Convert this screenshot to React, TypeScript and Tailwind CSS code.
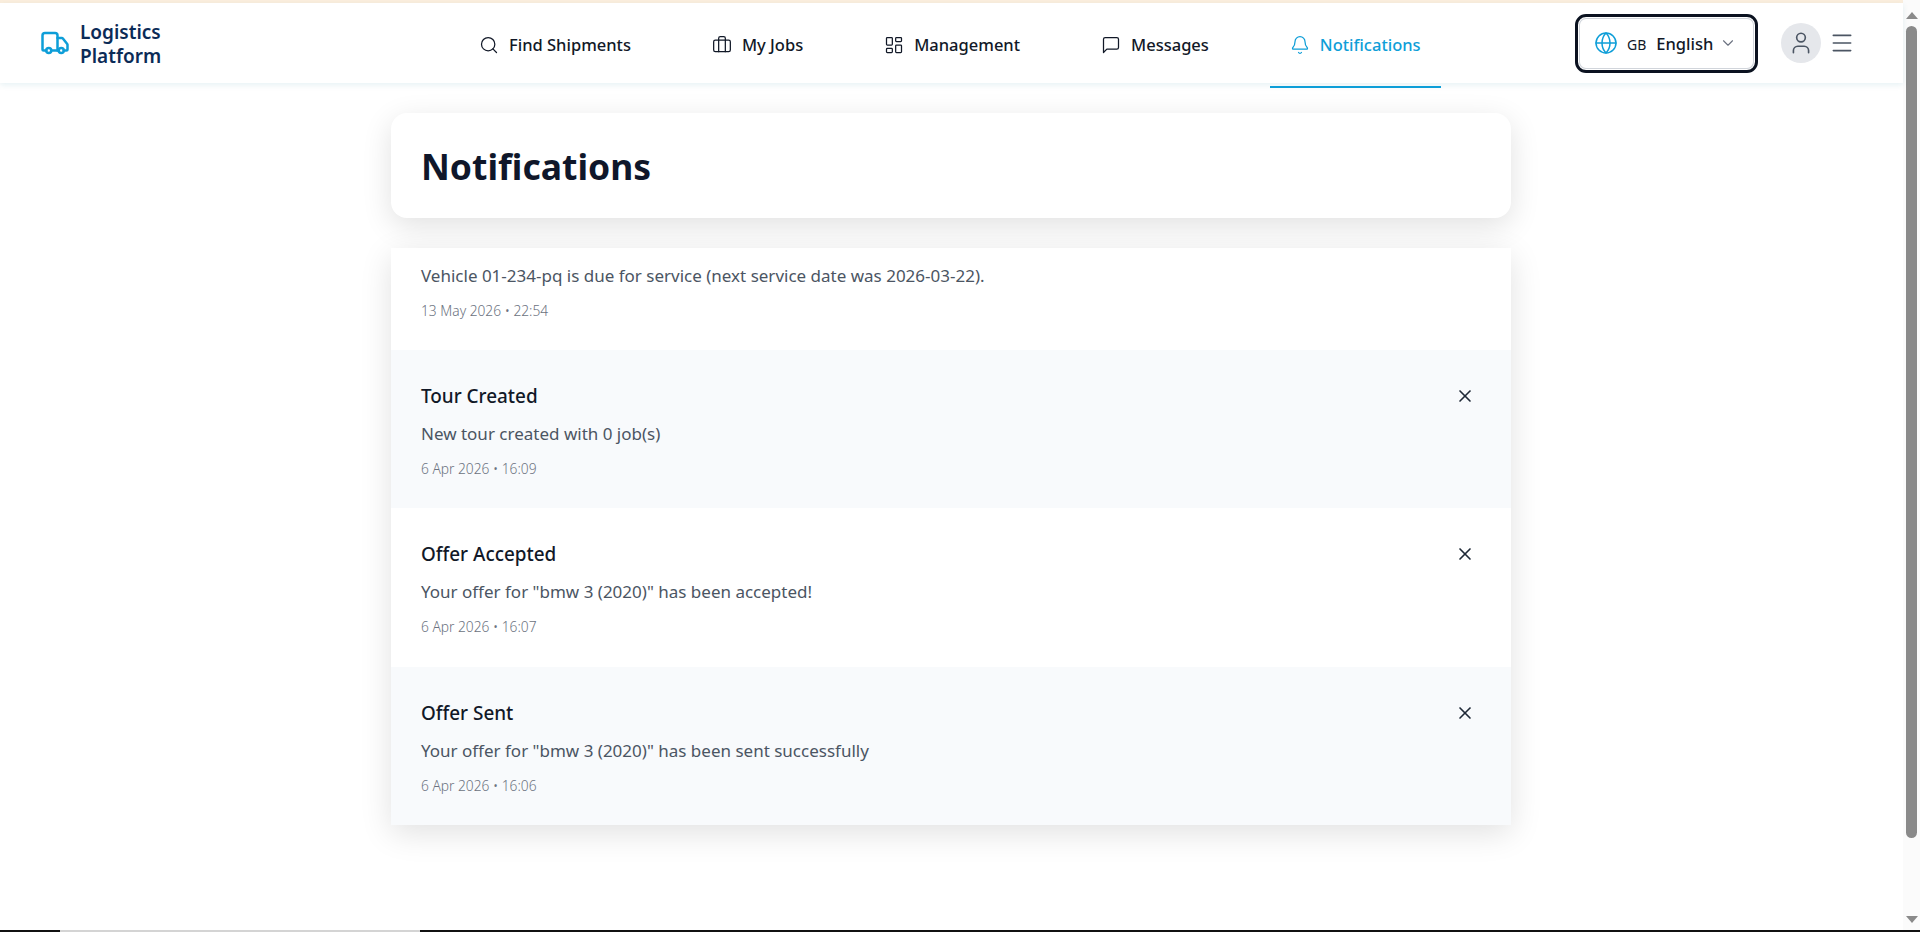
import { Bell, Briefcase, ChevronDown, Globe, LayoutDashboard, Menu, Search, Truck, User, X } from 'lucide-react'

const navItems = [
  { label: 'Find Shipments', icon: Search },
  { label: 'My Jobs', icon: Briefcase },
  { label: 'Management', icon: LayoutDashboard },
  { label: 'Messages', icon: MessageIcon },
  { label: 'Notifications', icon: Bell, active: true },
]

const notifications = [
  { title: 'Tour Created', body: 'New tour created with 0 job(s)', date: '6 Apr 2026 • 16:09', row: 'h-[158px] bg-[#f8fafc]' },
  { title: 'Offer Accepted', body: 'Your offer for "bmw 3 (2020)" has been accepted!', date: '6 Apr 2026 • 16:07', row: 'h-[159px] bg-white' },
  { title: 'Offer Sent', body: 'Your offer for "bmw 3 (2020)" has been sent successfully', date: '6 Apr 2026 • 16:06', row: 'h-[158px] bg-[#f8fafc]' },
]

// lucide's current message-square has lost the sharp tail, so it is drawn here
function MessageIcon({ className, strokeWidth }: { className?: string; strokeWidth?: number }) {
  return (
    <svg viewBox="0 0 24 24" fill="none" stroke="currentColor" strokeWidth={strokeWidth} strokeLinecap="round" strokeLinejoin="round" className={className}>
      <path d="M21 15a2 2 0 0 1-2 2H7l-4 4V5a2 2 0 0 1 2-2h14a2 2 0 0 1 2 2z" />
    </svg>
  )
}

export default function App() {
  return (
    <div className="flex h-screen flex-col overflow-hidden bg-white font-['Noto_Sans',sans-serif]">
      <div className="flex min-h-0 flex-1">
        <div className="min-w-0 flex-1">
          <div className="h-[3px] bg-[#fbeedd]" />
          <header className="relative z-10 flex h-[80px] items-center bg-white pl-[40px] pr-[48px] shadow-[0_2px_6px_rgba(14,116,144,0.10)]">
            <div className="flex w-[419px] items-center gap-[10px]">
              <Truck className="h-[30px] w-[30px] text-[#0e9ed8]" strokeWidth={2} />
              <span className="mt-[2px] w-[90px] text-[19px] leading-[24px] font-semibold text-[#0b2b57]">Logistics Platform</span>
            </div>
            <nav className="flex gap-[41px] self-stretch">
              {navItems.map(item => (
                <a
                  key={item.label}
                  className={
                    item.active
                      ? 'flex h-[85px] items-center gap-[10px] border-b-2 border-[#0e9ed8] px-[20px] pt-[1px] text-[16.5px] font-medium text-[#0e9ed8]'
                      : 'flex h-[85px] items-center gap-[10px] border-b-2 border-transparent px-[20px] pt-[1px] text-[16.5px] font-medium text-[#111827]'
                  }
                >
                  <item.icon className="h-[20px] w-[20px]" strokeWidth={1.5} />
                  {item.label}
                </a>
              ))}
            </nav>
            <div className="ml-auto flex items-center">
              <button className="flex h-[59px] w-[183px] items-center rounded-[11px] border-[3px] border-[#0b1220] pl-[16px] shadow-[inset_0_0_0_1px_#ffffff,inset_0_0_0_2px_#d1d5db]">
                <Globe className="h-[24px] w-[24px] text-[#0e9ed8]" strokeWidth={1.5} />
                <span className="ml-[9px] mt-[2px] text-[14px] text-[#111827]">GB</span>
                <span className="ml-[10px] mt-[2px] text-[16.5px] font-medium text-[#111827]">English</span>
                <ChevronDown className="ml-[6px] h-[18px] w-[18px] text-[#6b7280]" strokeWidth={1.5} />
              </button>
              <div className="ml-[23px] flex h-[40px] w-[40px] items-center justify-center rounded-full bg-[#e5e7eb]">
                <User className="h-[26px] w-[26px] text-[#4b5563]" strokeWidth={1.5} />
              </div>
              <Menu className="ml-[8px] h-[26px] w-[26px] text-[#4b5563]" strokeWidth={1.5} />
            </div>
          </header>

          <main className="ml-[391px] mt-[30px] w-[1120px]">
            <div className="flex h-[105px] items-center rounded-2xl bg-white px-[30px] pt-[2px] shadow-[0_8px_30px_rgba(0,0,0,0.12)]">
              <h1 className="text-[35.5px] font-bold text-[#0f172a]">Notifications</h1>
            </div>
            <div className="mt-[30px] bg-white shadow-[0_8px_30px_rgba(0,0,0,0.12)]">
              <div className="h-[102px] px-[30px] pt-[16px]">
                <p className="text-[17px] leading-[24px] text-[#4b5563]">Vehicle 01-234-pq is due for service (next service date was 2026-03-22).</p>
                <p className="mt-[13px] text-[13.75px] leading-[20px] font-light text-[#6b7280]">13 May 2026 • 22:54</p>
              </div>
              {notifications.map(n => (
                <div key={n.title} className={`flex items-start justify-between px-[30px] pt-[33px] ${n.row}`}>
                  <div>
                    <h3 className="text-[18.9px] leading-[26px] font-medium text-[#111827]">{n.title}</h3>
                    <p className="mt-[13px] text-[17px] leading-[24px] text-[#4b5563]">{n.body}</p>
                    <p className="mt-[13px] text-[13.75px] leading-[20px] font-light text-[#6b7280]">{n.date}</p>
                  </div>
                  <X className="mr-[6px] mt-[3px] h-[20px] w-[20px] text-[#1f2937]" strokeWidth={2} />
                </div>
              ))}
            </div>
          </main>
        </div>

        {/* browser scrollbar */}
        <div className="flex w-[17px] shrink-0 flex-col items-center bg-[#fbfbfb] pt-[12px] pb-[7px]">
          <div className="h-0 w-0 border-x-[6px] border-b-[7px] border-x-transparent border-b-[#8a8a8a]" />
          <div className="mt-[7px] w-[11px] flex-1 rounded-full bg-[#8a8a8a]" />
          <div className="mt-[78px] h-0 w-0 border-x-[6px] border-t-[7px] border-x-transparent border-t-[#8a8a8a]" />
        </div>
      </div>

      {/* taskbar edge */}
      <div className="flex h-[2px] shrink-0 bg-[#111111]">
        <div className="ml-[60px] w-[360px] bg-[#d4d4d4]" />
      </div>
    </div>
  )
}
